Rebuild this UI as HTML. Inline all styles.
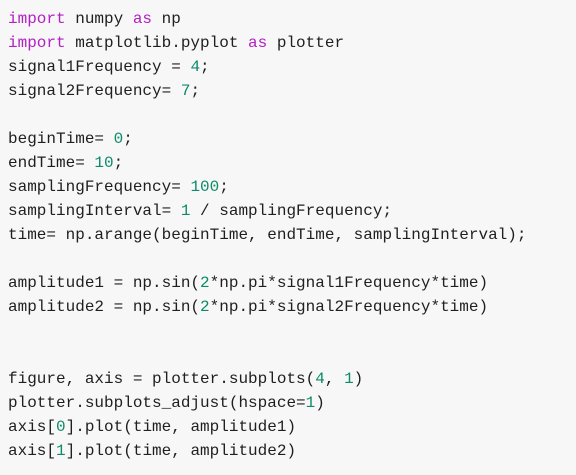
<!DOCTYPE html>
<html><head><style>
html,body{margin:0;padding:0;background:#f7f7f7;width:576px;height:475px;overflow:hidden}
pre{margin:0;padding:7px 0 0 8px;font-family:"Liberation Mono",monospace;font-size:16px;line-height:24px;color:#1f1f1f}
.k{color:#b31fc4}.n{color:#0d8a6a}
</style></head><body><pre><span class="k">import</span> numpy <span class="k">as</span> np
<span class="k">import</span> matplotlib.pyplot <span class="k">as</span> plotter
signal1Frequency = <span class="n">4</span>;
signal2Frequency= <span class="n">7</span>;

beginTime= <span class="n">0</span>;
endTime= <span class="n">10</span>;
samplingFrequency= <span class="n">100</span>;
samplingInterval= <span class="n">1</span> / samplingFrequency;
time= np.arange(beginTime, endTime, samplingInterval);

amplitude1 = np.sin(<span class="n">2</span>*np.pi*signal1Frequency*time)
amplitude2 = np.sin(<span class="n">2</span>*np.pi*signal2Frequency*time)


figure, axis = plotter.subplots(<span class="n">4</span>, <span class="n">1</span>)
plotter.subplots_adjust(hspace=<span class="n">1</span>)
axis[<span class="n">0</span>].plot(time, amplitude1)
axis[<span class="n">1</span>].plot(time, amplitude2)
</pre></body></html>
